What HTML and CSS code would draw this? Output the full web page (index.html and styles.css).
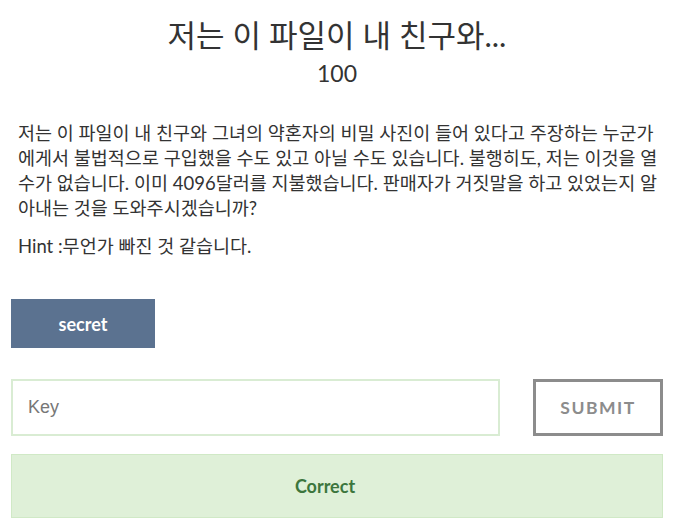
FILE: index.html
```html
<!DOCTYPE html>
<html lang="ko">
<head>
    <meta charset="UTF-8">
    <title>Challenge</title>
    <link rel="stylesheet" href="styles.css">
</head>
<body>
<div class="modal-body">
    <h3 class="chal-name">저는 이 파일이 내 친구와...</h3>
    <h4 class="chal-value">100</h4>

    <div class="chal-desc">
        <p>저는 이 파일이 내 친구와 그녀의 약혼자의 비밀 사진이 들어 있다고 주장하는 누군가에게서 불법적으로 구입했을 수도 있고 아닐 수도 있습니다. 불행히도, 저는 이것을 열 수가 없습니다. 이미 4096달러를 지불했습니다. 판매자가 거짓말을 하고 있었는지 알아내는 것을 도와주시겠습니까?</p>
        <p>Hint :무언가 빠진 것 같습니다.</p>
    </div>

    <div class="chal-files">
        <a class="file-button" href="#">secret</a>
    </div>

    <form class="submit-row">
        <input type="text" class="answer-input" placeholder="Key">
        <button type="button" class="submit-button">Submit</button>
    </form>

    <div class="result-notification">Correct</div>
</div>
</body>
</html>
```

FILE: styles.css
```css
body {
    margin: 0;
    background: #fff;
    font-family: Lato, "Noto Sans CJK KR", sans-serif;
    color: #333;
}
.modal-body {
    padding: 10px 13px 8px 11px;
}
.chal-name {
    margin: 5px 0 0;
    text-align: center;
    font-size: 31px;
    font-weight: 400;
    line-height: 40px;
}
.chal-value {
    margin: 3px 0 0;
    text-align: center;
    font-size: 23px;
    font-weight: 400;
    line-height: 30px;
}
.chal-desc {
    margin-top: 33px;
    padding-left: 7px;
}
.chal-desc p {
    margin: 0 0 13px;
    font-size: 18.5px;
    line-height: 25px;
    word-break: break-all;
}
.chal-files {
    margin-top: 40px;
}
.file-button {
    display: inline-flex;
    align-items: center;
    justify-content: center;
    width: 144px;
    height: 49px;
    background: #5b7290;
    color: #fff;
    font-weight: 700;
    font-size: 18px;
    text-decoration: none;
}
.submit-row {
    display: flex;
    justify-content: space-between;
    margin: 31px 0 0;
}
.answer-input {
    box-sizing: border-box;
    width: 489px;
    height: 57px;
    border: 2px solid #d9ecd3;
    padding: 0 15px;
    font-family: "Liberation Sans", Arial, sans-serif;
    font-size: 18px;
    outline: none;
}
.answer-input::placeholder {
    color: #777;
}
.submit-button {
    box-sizing: border-box;
    width: 130px;
    height: 57px;
    border: 3px solid #8c8c8c;
    background: #fff;
    color: #8c8c8c;
    font-family: Lato, sans-serif;
    font-weight: 700;
    font-size: 17.5px;
    letter-spacing: 1.5px;
    text-transform: uppercase;
}
.result-notification {
    margin-top: 18px;
    height: 64px;
    box-sizing: border-box;
    display: flex;
    align-items: center;
    justify-content: center;
    padding-right: 24px;
    background: #dff0d8;
    border: 1px solid #d0e9c6;
    color: #3c763d;
    font-weight: 700;
    font-size: 18px;
}
```
